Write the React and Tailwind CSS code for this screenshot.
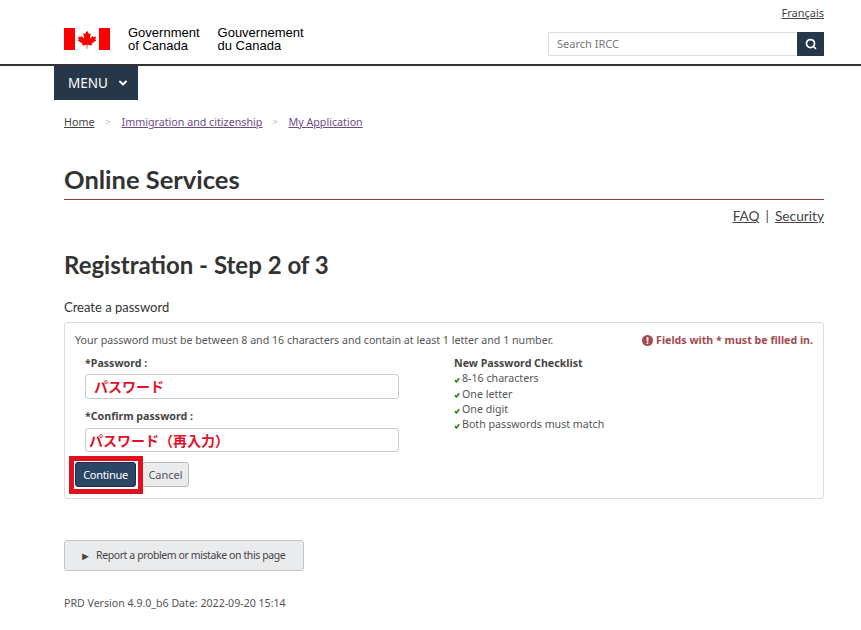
import { ChevronDown, Search } from 'lucide-react';

const checklist = ['8-16 characters', 'One letter', 'One digit', 'Both passwords must match'];

function Flag() {
  return (
    <svg width="46" height="22" viewBox="0 0 46 22" className="shrink-0">
      <rect x="0" y="0" width="11" height="22" fill="#f00" />
      <rect x="35" y="0" width="11" height="22" fill="#f00" />
      <path
        fill="#f00"
        d="M23 1.5l-2 3.6c-.2.4-.6.3-1 .1l-1.400-.8 1 5.500c.2 1-.5 1-.8.6l-2.300-2.600-.4 1.300c0 .2-.3.4-.6.3l-2.900-.6.8 2.800c.2.600.3.900-.2 1.100l-1 .5 5.300 4.300c.2.200.3.500.2.800l-.5 1.500 5.400-.7v5h.8v-5l5.400.7-.5-1.500c-.1-.3 0-.6.2-.8l5.300-4.300-1-.5c-.5-.2-.4-.5-.2-1.100l.8-2.800-2.900.6c-.3.100-.6-.1-.6-.3l-.4-1.300-2.300 2.600c-.3.400-1 .4-.8-.6l1-5.500-1.400.8c-.4.200-.8.300-1-.1z"
        transform="translate(2.900 1.500) scale(.875 .8)"
      />
    </svg>
  );
}

function Check() {
  return (
    <svg width="6" height="6" viewBox="0 0 10 10" className="shrink-0 mt-[2px] mr-[2px]">
      <path d="M1.500 5.200L4 8l4.800-6" fill="none" stroke="#2e8b1f" strokeWidth="3" />
    </svg>
  );
}

export default function App() {
  return (
    <div className="w-[861px] h-[630px] overflow-hidden bg-white text-[#333] font-['Noto_Sans','Noto_Sans_CJK_JP',sans-serif]">
      <header className="h-[66px] border-b-2 border-[#333] pl-[64px] pr-[37px] flex justify-between">
        <div className="flex items-start pt-[28px]">
          <Flag />
          <div className="ml-[18px] flex gap-[18px] font-['Liberation_Sans',sans-serif] text-[13px] leading-[12.500px] text-black -mt-[1px]">
            <span>Government<br />of Canada</span>
            <span>Gouvernement<br />du Canada</span>
          </div>
        </div>
        <div className="flex flex-col items-end pt-[5px]">
          <a href="#" className="text-[11px] leading-[15px] underline text-[#444]">Français</a>
          <div className="flex mt-[12px] h-[24px] w-[276px]">
            <div className="flex-1 border border-[#ddd] border-r-0 pl-[8px] text-[11px] leading-[22px] text-[#777]">Search IRCC</div>
            <div className="w-[27px] bg-[#26374a] flex items-center justify-center">
              <Search size={12} color="#fff" strokeWidth={3.500} />
            </div>
          </div>
        </div>
      </header>

      <nav className="ml-[54px] w-[84px] h-[34px] bg-[#26374a] text-white flex items-center pl-[14px] gap-[9px] text-[13.500px]">
        <span>MENU</span>
        <ChevronDown size={12} strokeWidth={4} />
      </nav>

      <main className="pl-[64px] pr-[37px]">
        <div className="mt-[14px] flex items-center text-[10.700px] leading-[16px] text-[#6b4b8a]">
          <a href="#" className="underline text-[#444]">Home</a>
          <span className="mx-[11px] text-[#bbb] text-[9px]">&gt;</span>
          <a href="#" className="underline">Immigration and citizenship</a>
          <span className="mx-[10.500px] text-[#bbb] text-[9px]">&gt;</span>
          <a href="#" className="underline">My Application</a>
        </div>

        <h1 className="mt-[33px] h-[37px] border-b border-[#8f3f45] font-['Lato',sans-serif] font-bold text-[25.500px] leading-[32px] text-[#333]">
          Online Services
        </h1>

        <div className="mt-[7px] flex justify-end gap-[6px] font-['Lato',sans-serif] text-[13.700px] leading-[18px] text-[#444]">
          <a href="#" className="underline">FAQ</a>
          <span>|</span>
          <a href="#" className="underline">Security</a>
        </div>

        <h2 className="mt-[24px] font-['Lato',sans-serif] font-bold text-[24px] leading-[32px] text-[#333]">
          Registration - Step 2 of 3
        </h2>

        <p className="mt-[17px] font-['Lato',sans-serif] text-[13px] leading-[18px] text-[#333]">Create a password</p>

        <section className="mt-[6px] h-[177px] border border-[#ddd] rounded-[3px] pl-[10px] pr-[10px] pt-[9px] text-[10.650px] text-[#555]">
          <div className="flex justify-between leading-[16px]">
            <span>Your password must be between 8 and 16 characters and contain at least 1 letter and 1 number.</span>
            <span className="flex items-center gap-[3px] font-bold text-[#a34a50]">
              <svg width="11" height="11" viewBox="0 0 10 10">
                <circle cx="5" cy="5" r="5" fill="#a34a50" />
                <rect x="4.200" y="2" width="1.600" height="3.800" fill="#fff" />
                <rect x="4.200" y="6.600" width="1.600" height="1.500" fill="#fff" />
              </svg>
              Fields with * must be filled in.
            </span>
          </div>

          <div className="flex">
            <div className="w-[379px] pl-[10px]">
              <label className="block mt-[8px] font-bold leading-[15px] text-[#444]">*Password :</label>
              <div className="mt-[3px] w-[314px] h-[25px] border border-[#ccc] rounded-[3px] pl-[8px] text-[14px] leading-[24px] font-bold text-[#e0112b]">
                パスワード
              </div>
              <label className="block mt-[10px] font-bold leading-[15px] text-[#444]">*Confirm password :</label>
              <div className="mt-[4px] w-[314px] h-[24px] border border-[#ccc] rounded-[3px] pl-[3px] text-[14px] leading-[24px] font-bold text-[#e0112b]">
                パスワード（再入力）
              </div>
            </div>
            <div className="mt-[8px] leading-[15.300px]">
              <p className="font-bold text-[#444]">New Password Checklist</p>
              <ul>
                {checklist.map((item) => (
                  <li key={item} className="flex items-center">
                    <Check />
                    {item}
                  </li>
                ))}
              </ul>
            </div>
          </div>

          <div className="mt-[10px] flex items-center text-[11px]">
            <div className="relative">
              <button className="w-[61px] h-[25px] pt-[1px] bg-[#2b4565] border border-[#1c2d42] rounded-[3px] text-white tracking-[-0.300px]">Continue</button>
              <div className="absolute -left-[6px] -top-[6px] w-[74px] h-[38px] border-[5px] border-[#e0101f]" />
            </div>
            <button className="ml-[6px] w-[47px] h-[25px] pt-[1px] bg-[#eaebed] border border-[#bbb] rounded-[3px] text-[#555]">Cancel</button>
          </div>
        </section>

        <button className="mt-[41px] w-[240px] h-[31px] pt-[1px] bg-[#eaebed] border border-[#c5c7ca] rounded-[3px] pl-[15px] flex items-center text-[10.500px] tracking-[-0.400px] text-[#444]">
          <span className="w-[16px] text-left text-[11px]">►</span>
          Report a problem or mistake on this page
        </button>

        <p className="mt-[25px] text-[10.600px] leading-[14px] text-[#555]">PRD Version 4.9.0_b6 Date: 2022-09-20 15:14</p>
      </main>
    </div>
  );
}
